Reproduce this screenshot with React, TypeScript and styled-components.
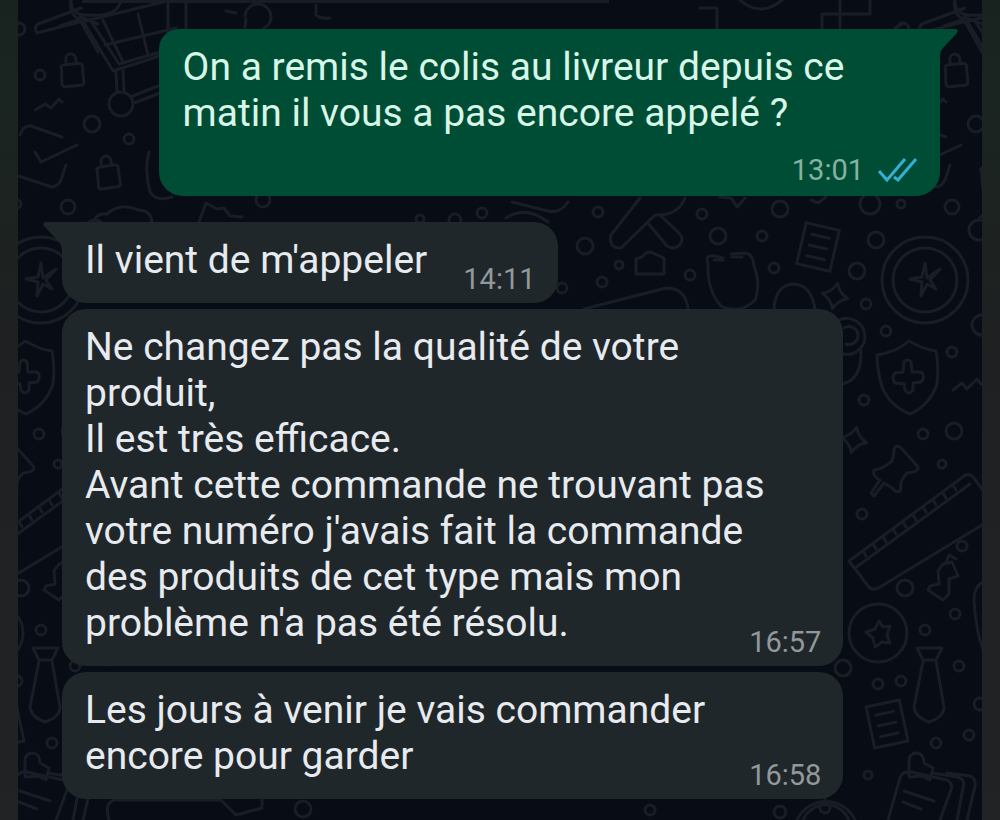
import React from "react";
import styled, { createGlobalStyle, css } from "styled-components";

const GlobalStyle = createGlobalStyle`
  * { box-sizing: border-box; }
  body { margin: 0; background: #060a12; }
`;

const Page = styled.div`
  display: flex;
  min-height: 100vh;
  font-family: Roboto, "Liberation Sans", sans-serif;
`;

const Edge = styled.div`
  flex: 0 0 18px;
  background: linear-gradient(#18221e, #1a2420 12%, #1f2021 45%, #222324);
`;

const Chat = styled.main`
  position: relative;
  flex: 1;
  min-width: 0;
  overflow: hidden;
  background: #080c14;
`;

const Wallpaper = styled.svg`
  position: absolute;
  inset: 0;
  width: 100%;
  height: 100%;
  fill: none;
  stroke: #191d26;
  stroke-width: 3;
  stroke-linecap: round;
  stroke-linejoin: round;
`;

const Messages = styled.div`
  position: relative;
  display: flex;
  flex-direction: column;
  align-items: flex-start;
  gap: 6px;
  padding: 0 42px 20px 44px;
`;

const PreviousBubble = styled.div`
  width: 60%;
  height: 3px;
  margin: 0 0 20px 20px;
  background: #171d23;
`;

const Bubble = styled.article<{ $sent?: boolean; $short?: boolean; $first?: boolean }>`
  position: relative;
  display: flex;
  flex-direction: ${(p) => (p.$short ? "row" : "column")};
  align-items: flex-end;
  gap: ${(p) => (p.$short ? "36px" : "0")};
  width: ${(p) => (p.$short ? "auto" : "89%")};
  padding: 15px 22px 8px 23px;
  border-radius: 24px;
  background: #20272a;
  color: #e7eaee;
  ${(p) =>
    p.$first &&
    css`
      border-top-left-radius: 0;
    `}
  ${(p) =>
    p.$sent &&
    css`
      align-self: flex-end;
      margin-bottom: 20px;
      padding: 15px 22px 10px 24px;
      border-top-left-radius: 20px;
      border-top-right-radius: 0;
      background: #004d35;
      color: #d8f6e8;
    `}
`;

const Tail = styled.svg<{ $sent?: boolean }>`
  position: absolute;
  top: 0;
  ${(p) => (p.$sent ? "left: 100%; margin-left: -1px; fill: #004d35;" : "right: 100%; margin-right: -1px; fill: #20272a;")}
`;

const Text = styled.p<{ $short?: boolean }>`
  align-self: flex-start;
  margin: 0;
  padding-bottom: ${(p) => (p.$short ? "12px" : "0")};
  font-size: 39px;
  line-height: 46px;
`;

const Line = styled.span`
  display: block;
  width: fit-content;
`;

const Meta = styled.div<{ $sent?: boolean }>`
  display: flex;
  align-items: center;
  gap: 14px;
  margin-top: ${(p) => (p.$sent ? "18px" : "-20px")};
  font-size: 29px;
  line-height: 32px;
  color: ${(p) => (p.$sent ? "#86b3a0" : "#92999c")};
`;

function Lock({ x, y, r = 0 }: { x: number; y: number; r?: number }) {
  return (
    <g transform={`translate(${x} ${y}) rotate(${r})`}>
      <path d="M-10-6 Q-12-8-7-9 H7 Q12-9 11-5 L11 10 Q11 13 8 13 H-8 Q-11 13-11 10Z M-5-10 V-14 A5 5 0 0 1 5-14 V-10" />
    </g>
  );
}

function Note({ x, y, r }: { x: number; y: number; r: number }) {
  return (
    <g transform={`translate(${x} ${y}) rotate(${r})`}>
      <path d="M-17-21 H17 V21 H-17Z M-9-11 H9 M-9 0 H9 M-9 11 H9" />
    </g>
  );
}

function Spark({ x, y }: { x: number; y: number }) {
  return <path transform={`translate(${x} ${y}) rotate(12)`} d="M0-13 Q3-4 13 0 Q4 3 0 13 Q-3 4-13 0 Q-4-3 0-13Z" />;
}

const dots: [number, number, number][] = [
  [924, 75, 5], [976, 124, 8], [1013, 139, 5], [952, 207, 7], [903, 29, 6],
  [780, 209, 8], [870, 204, 10], [901, 204, 4], [598, 212, 5], [702, 214, 5],
  [718, 236, 8], [762, 236, 5], [585, 246, 8], [619, 265, 4], [602, 282, 5],
  [690, 275, 5], [774, 268, 5], [876, 240, 8], [857, 271, 8], [866, 304, 5],
  [886, 331, 5], [979, 230, 10], [982, 325, 10], [952, 352, 5], [864, 400, 5],
  [923, 434, 5], [954, 431, 8], [942, 464, 4], [862, 514, 5], [962, 546, 5],
  [905, 588, 8], [955, 614, 5], [925, 630, 5], [843, 668, 8], [959, 666, 5],
  [878, 684, 5], [901, 681, 5], [980, 704, 6], [936, 743, 5], [969, 735, 5],
  [868, 775, 4], [482, 213, 5], [455, 220, 6], [420, 219, 4], [562, 288, 5],
  [263, 200, 7], [303, 809, 8], [650, 810, 5], [780, 812, 6],
];

function Tile() {
  return (
    <g>
      {dots.map(([x, y, r]) => (
        <circle key={`${x}-${y}`} cx={x} cy={y} r={r} />
      ))}
      <Lock x={956} y={73} r={-5} />
      <Lock x={992} y={175} r={-8} />
      <path d="M919 110 L929 104 L935 108 L943 99 L946 102" />
      <path d="M904 135 Q907 125 915 126 L946 137 M919 152 L925 162 L961 145 M902 176 L936 187 Q942 186 945 180 L950 165" />
      <path d="M1033 152 Q1028 170 1034 192 Q1040 202 1056 197" />
      <path d="M978 220 Q982 213 991 214 Q1004 202 1022 210 Q1035 210 1036 222 M1083 222 L1090 203 L1101 209 L1108 208 L1114 216 L1126 217" />
      {/* medal, shield and coin */}
      <circle cx="925" cy="280" r="43" />
      <circle cx="925" cy="280" r="32" />
      <path d="M925 263 L927 278 L940 269 L930 280 L936 289 L927 284 L921 296 L922 282 L910 279 L922 277Z" />
      <path d="M909 341 Q925 350 936 351 Q939 365 937 384 Q930 405 910 414 Q890 406 882 387 Q877 370 877 355 Q897 352 909 341Z" />
      <path d="M904 362 Q908 358 911 362 L912 372 L921 372 Q926 376 921 382 L913 383 L913 390 Q909 396 905 390 L904 384 L895 383 Q891 378 895 373 L903 372Z" />
      <path d="M953 390 L962 383 L967 389 L977 379 L981 384 L990 381" />
      <circle cx="878" cy="633" r="29" />
      <path d="M879 621 L883 627 L890 626 L887 635 L890 643 L882 642 L875 647 L873 638 L866 632 L875 629Z" />
      {/* bandaged figure beside the second bubble */}
      <path d="M836 322 A18 18 0 1 1 840 353 M844 328 A9 9 0 1 1 846 344 M861 350 Q862 380 842 384" />
      <Spark x={835} y={296} />
      <Spark x={854} y={440} />
      <Note x={818} y={247} r={13} />
      <Note x={887} y={724} r={-12} />
      {/* crossed tools */}
      <path d="M640 198 L611 235 Q608 248 621 248 L655 215 Q678 216 685 198 M648 223 L667 246 Q676 251 681 243 Q684 238 678 232 L661 216" />
      <path d="M636 259 L642 257 Q648 249 655 254 L664 258 L664 274 H636Z" />
      <path d="M708 264 Q704 254 715 256 L723 258 M731 254 L745 253 Q753 254 754 266 Q761 285 755 300 Q740 315 721 306 Q707 290 708 264 M714 260 H723 M732 257 H742" />
      <path d="M774 310 Q775 284 795 284 Q812 286 815 310 M584 309 L666 288 Q685 288 688 308" />
      <path d="M720 197 L731 198 L737 207 L745 198 M811 200 L818 203 L826 197" />
      <path d="M506 218 Q526 205 548 222 M512 202 L548 211 Q560 214 568 202" />
      {/* push pins */}
      <path d="M894 449 Q897 443 902 449 Q910 458 918 467 Q919 472 907 473 Q899 481 901 489 Q898 495 892 488 L884 483 L874 496 L871 493 L880 480 Q872 476 874 470 Q883 469 892 461 Q894 456 894 449Z" />
      <path d="M943 564 L952 562 L958 576 L949 579 L949 594 L943 600 L928 590 L930 586 L939 584 L938 571Z M946 563 L949 555 L956 559" />
      {/* ruler */}
      <path d="M849 561 L964 476 Q969 472 974 478 L1000 514 L880 587 Q873 592 868 586Z M855 568 L970 484" />
      <path d="M863 551 L866 556 M873 544 L876 549 M883 537 L886 542 M893 529 L896 534 M903 522 L906 527 M913 515 L916 520 M923 507 L926 512 M933 500 L936 505 M943 493 L946 498 M953 485 L956 490" />
      <path d="M990 580 Q974 582 974 600 Q976 640 990 665" />
      {/* neck tie */}
      <path d="M917 648 H942 L936 660 H923Z M923 661 L914 707 Q915 717 929 722 Q944 717 944 707 L936 661" />
      {/* clipboard */}
      <path d="M888 820 L900 778 Q902 771 911 772 L947 780 Q953 783 951 790 L940 820 M932 773 L957 777 Q966 779 963 788 L957 820 M947 773 L970 776 Q976 778 975 786 L967 820 M904 791 L934 801 M903 802 L921 809" />
      <path d="M909 771 L909 761 Q909 753 917 753 Q924 754 924 763 L933 768 L930 780 L922 776 L909 777Z" />
      <path d="M797 820 A32 32 0 0 1 855 820 M803 820 A25 25 0 0 1 849 820" />
      <circle cx="825" cy="808" r="5" />
      <path d="M825 803 V793 M993 820 Q988 803 998 800 H1105 L1120 815 L1146 808 V800" />
      {/* shopping cart */}
      <path d="M965 8 L922 24 Q917 28 921 33 L967 21 L997 71 L1062 50 M975 21 L1003 64 L1062 47 M965 22 L1072 -4 M987 20 L1007 62 M1022 14 L1032 55 M989 45 L1060 28 M1052 0 V50 M1070 0 V40 M1000 72 L1001 91 M1007 71 L1008 91 M1017 96 L1042 86 M1018 103 L1044 93" />
      <circle cx="1005" cy="104" r="12" />
      <path d="M955 0 Q955 17 975 15 Q1002 17 1005 0 M1129 16 A13 13 0 0 1 1155 18 Q1155 24 1148 28 M1129 27 L1130 19 M1110 11 L1120 13 M1200 5 V15 Q1205 19 1214 18" />
      <path d="M700 8 H717 V28 M740 0 Q760 18 782 0 M822 28 V14 H870 V0 M840 0 V28 M895 28 L902 24 M955 0 Q952 14 964 20 L982 52 M964 17 L982 24 M944 26 L962 20" />
    </g>
  );
}

function ReadTicks() {
  return (
    <svg width="40" height="26" viewBox="0 0 40 26" fill="none" stroke="#35b0d3" strokeWidth="3" role="img" aria-label="Lu">
      <path d="M1 14 L9 23 L27 2 M16 20 L20 23 L38 2" />
    </svg>
  );
}

function Lines({ of }: { of: string[] }) {
  return (
    <Text>
      {of.map((line) => (
        <Line key={line}>{line}</Line>
      ))}
    </Text>
  );
}

export default function App() {
  return (
    <Page>
      <GlobalStyle />
      <Edge />
      <Chat>
        <Wallpaper viewBox="18 0 964 820" preserveAspectRatio="xMinYMin slice" aria-hidden="true">
          <Tile />
          <g transform="translate(-884 0)">
            <Tile />
          </g>
        </Wallpaper>
        <Messages>
          <PreviousBubble />
          <Bubble $sent>
            <Tail $sent width="19" height="26" viewBox="0 0 19 26">
              <path d="M0 0 H17 Q20 1 18 4 L4 19 Q1 22 1 26 H0Z" />
            </Tail>
            <Lines of={["On a remis le colis au livreur depuis ce", "matin il vous a pas encore appelé ?"]} />
            <Meta $sent>
              <time>13:01</time>
              <ReadTicks />
            </Meta>
          </Bubble>
          <Bubble $short $first>
            <Tail width="20" height="30" viewBox="0 0 20 30">
              <path d="M20 0 H2 Q-1 1 1 4 L16 20 Q19 24 19 30 H20Z" />
            </Tail>
            <Text $short>Il vient de m'appeler</Text>
            <Meta>
              <time>14:11</time>
            </Meta>
          </Bubble>
          <Bubble>
            <Lines
              of={[
                "Ne changez pas la qualité de votre",
                "produit,",
                "Il est très efficace.",
                "Avant cette commande ne trouvant pas",
                "votre numéro j'avais fait la commande",
                "des produits de cet type mais mon",
                "problème n'a pas été résolu.",
              ]}
            />
            <Meta>
              <time>16:57</time>
            </Meta>
          </Bubble>
          <Bubble>
            <Lines of={["Les jours à venir je vais commander", "encore pour garder"]} />
            <Meta>
              <time>16:58</time>
            </Meta>
          </Bubble>
        </Messages>
      </Chat>
      <Edge />
    </Page>
  );
}
